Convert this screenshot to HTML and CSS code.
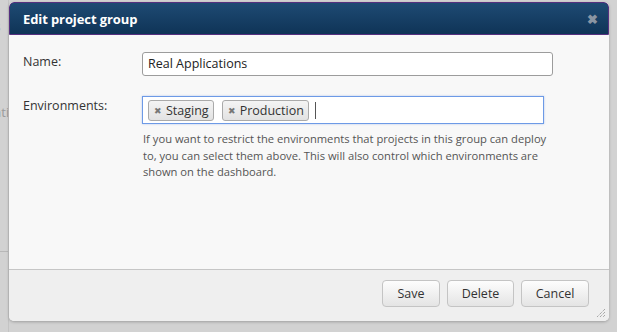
FILE: index.html
```html
<!DOCTYPE html>
<html>
<head>
<meta charset="utf-8">
<link rel="stylesheet" href="styles.css">
</head>
<body>
<div class="page">
  <div class="page-top"><span class="page-word">Projects</span></div>
  <div class="page-row"><span class="page-word">Real Applications</span></div>
  <div class="page-rule"></div>
  <div class="page-side"></div>
</div>
<div class="dialog">
  <div class="dialog-title">
    <span class="title-text">Edit project group</span>
    <span class="close">✖</span>
  </div>
  <div class="dialog-body">
    <div class="field">
      <label class="field-label">Name:</label>
      <div class="field-control">
        <div class="text-input">Real Applications</div>
      </div>
    </div>
    <div class="field">
      <label class="field-label">Environments:</label>
      <div class="field-control">
        <div class="tag-input">
          <span class="tag"><span class="tag-x">✖</span>Staging</span>
          <span class="tag"><span class="tag-x">✖</span>Production</span>
          <span class="caret"></span>
        </div>
        <p class="help">If you want to restrict the environments that projects in this group can deploy<br>to, you can select them above. This will also control which environments are shown on the dashboard.</p>
      </div>
    </div>
  </div>
  <div class="dialog-footer">
    <button class="btn">Save</button>
    <button class="btn">Delete</button>
    <button class="btn">Cancel</button>
    <svg class="grip" width="10" height="10" viewBox="0 0 10 10"><path d="M9 1L1 9M9 4L4 9M9 7L7 9" stroke="#888" stroke-width="1" stroke-dasharray="1 1"/></svg>
  </div>
</div>
</body>
</html>
```

FILE: styles.css
```css
html, body {
  margin: 0;
  padding: 0;
}
body {
  width: 617px;
  height: 332px;
  overflow: hidden;
  background: #d2d2d2;
  font-family: "Open Sans", "Liberation Sans", sans-serif;
  position: relative;
}
.page {
  position: absolute;
  inset: 0;
}
.page-top {
  height: 52px;
  display: flex;
  align-items: center;
}
.page-word {
  color: #9a9a9a;
  font-size: 13px;
  margin-left: -48px;
}
.page-row {
  height: 30px;
  margin-top: 45px;
  display: flex;
  align-items: center;
}
.page-row .page-word {
  margin-left: -72px;
}
.page-rule {
  position: absolute;
  left: 0;
  top: 251px;
  width: 20px;
  border-top: 1px solid #b8b8b8;
}
.page-side {
  position: absolute;
  left: 8px;
  top: 0;
  bottom: 0;
  border-left: 1px solid #c4c4c4;
}
.dialog {
  position: absolute;
  left: 9px;
  top: 2px;
  width: 600px;
  height: 319px;
  border-radius: 5px;
  overflow: hidden;
  background: #f8f8f8;
  box-shadow: 0 1px 3px rgba(0,0,0,0.25);
  display: flex;
  flex-direction: column;
}
.dialog-title {
  height: 31px;
  border: 1px solid #55307f;
  border-radius: 5px 5px 0 0;
  background: linear-gradient(#1e4a73, #0f3457);
  display: flex;
  align-items: center;
  justify-content: space-between;
  padding: 0 10px 0 13px;
}
.title-text {
  color: #fff;
  font-weight: bold;
  font-size: 13px;
  letter-spacing: -0.1px;
}
.close {
  color: #8a95a3;
  font-size: 13px;
  font-weight: bold;
}
.dialog-body {
  flex: 1;
  padding: 17px 20px 0 14px;
  color: #333;
  font-size: 12.5px;
}
.field {
  display: flex;
  margin-bottom: 20px;
}
.field-label {
  width: 119px;
  padding-top: 1px;
  line-height: 17px;
}
.field-control {
  flex: 1;
}
.text-input {
  width: 399px;
  height: 22px;
  border: 1px solid #9c9c9c;
  border-radius: 3px;
  background: #fff;
  padding: 0 5px;
  line-height: 22px;
  font-size: 12.5px;
  color: #222;
}
.tag-input {
  width: 390px;
  height: 26px;
  border: 1px solid #6d9ae6;
  background: #fff;
  display: flex;
  align-items: center;
  gap: 8px;
  padding: 0 5px;
  box-shadow: 0 0 2px rgba(80,130,220,0.4);
}
.tag {
  display: inline-flex;
  align-items: center;
  height: 19px;
  border: 1px solid #aaa;
  border-radius: 3px;
  background: linear-gradient(#f4f4f4, #e2e2e2);
  padding: 0 4px 0 5px;
  font-size: 12.5px;
  color: #333;
}
.tag-x {
  font-size: 8.5px;
  color: #777;
  margin-right: 4px;
}
.caret {
  width: 1px;
  height: 17px;
  background: #555;
  margin-left: -2px;
}
.help {
  margin: 7px 0 0 1px;
  width: 420px;
  font-size: 11.2px;
  line-height: 16.5px;
  color: #555;
}
.dialog-footer {
  border-top: 1px solid #c6c6c6;
  background: #efefef;
  display: flex;
  justify-content: flex-end;
  align-items: flex-start;
  gap: 7px;
  padding: 10px 20px 0 0;
  box-sizing: border-box;
  height: 52px;
  position: relative;
}
.btn {
  height: 27px;
  border: 1px solid #c4c4c4;
  border-radius: 4px;
  background: linear-gradient(#fdfdfd, #e4e4e4);
  font-family: inherit;
  font-size: 12.5px;
  color: #333;
  padding: 0;
}
.btn:nth-child(1) { width: 58px; }
.btn:nth-child(2) { width: 67px; }
.btn:nth-child(3) { width: 68px; }
.grip {
  position: absolute;
  right: 3px;
  bottom: 3px;
}
```
